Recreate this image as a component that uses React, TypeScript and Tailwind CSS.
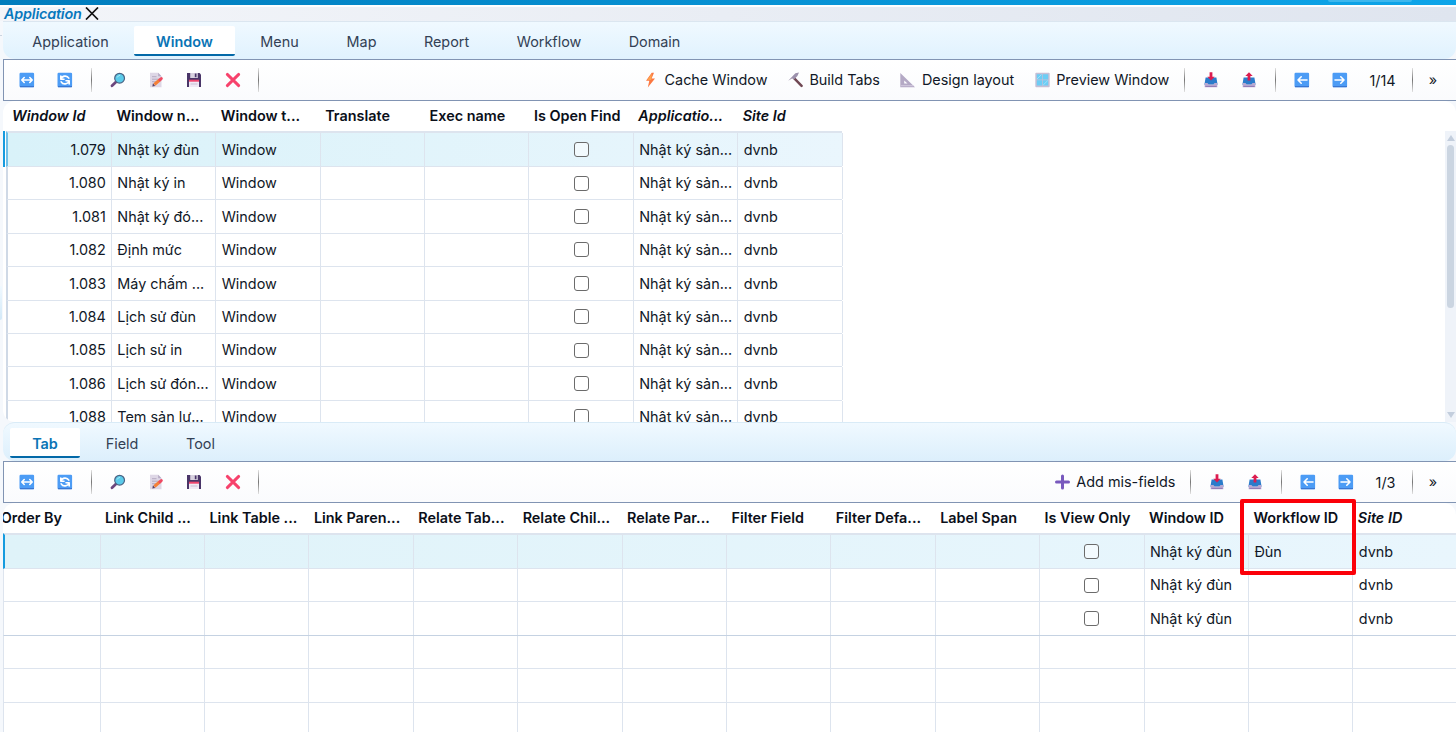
import type { ReactNode } from 'react'
import clsx from 'clsx'

type Column = {
  label: string
  italic?: boolean
}

const mainTabs = ['Application', 'Window', 'Menu', 'Map', 'Report', 'Workflow', 'Domain']
const detailTabs = ['Tab', 'Field', 'Tool']

const windowColumns: Column[] = [
  { label: 'Window Id', italic: true },
  { label: 'Window n...' },
  { label: 'Window t...' },
  { label: 'Translate' },
  { label: 'Exec name' },
  { label: 'Is Open Find' },
  { label: 'Applicatio...', italic: true },
  { label: 'Site Id', italic: true },
]

const windowRows = [
  { id: '1.079', name: 'Nhật ký đùn' },
  { id: '1.080', name: 'Nhật ký in' },
  { id: '1.081', name: 'Nhật ký đó...' },
  { id: '1.082', name: 'Định mức' },
  { id: '1.083', name: 'Máy chấm ...' },
  { id: '1.084', name: 'Lịch sử đùn' },
  { id: '1.085', name: 'Lịch sử in' },
  { id: '1.086', name: 'Lịch sử đón...' },
  { id: '1.088', name: 'Tem sản lư...' },
]

const tabColumns: Column[] = [
  { label: 'Order By' },
  { label: 'Link Child ...' },
  { label: 'Link Table ...' },
  { label: 'Link Paren...' },
  { label: 'Relate Tab...' },
  { label: 'Relate Chil...' },
  { label: 'Relate Par...' },
  { label: 'Filter Field' },
  { label: 'Filter Defa...' },
  { label: 'Label Span' },
  { label: 'Is View Only' },
  { label: 'Window ID' },
  { label: 'Workflow ID' },
  { label: 'Site ID', italic: true },
]

const tabRows = [
  { window: 'Nhật ký đùn', workflow: 'Đùn', site: 'dvnb' },
  { window: 'Nhật ký đùn', workflow: '', site: 'dvnb' },
  { window: 'Nhật ký đùn', workflow: '', site: 'dvnb' },
]

const App = () => (
  <div className="flex h-[732px] w-[1456px] flex-col overflow-hidden bg-[#f5f8fc] font-['Inter','Noto_Sans',sans-serif] text-[14.4px] text-[#111827]">
    <div className="flex h-[5px] shrink-0 justify-end bg-linear-to-r from-[#027dbd] to-[#0ea5e9] pr-11">
      <div className="h-[2px] w-[84px] rounded-b bg-[#3eb7ed]" />
    </div>
    <TitleStrip />
    <div className="flex min-h-0 flex-1">
      {/* Edge of the collapsed sidebar */}
      <div className="flex w-[3px] shrink-0 flex-col pr-px">
        <div className="mt-[14px] h-px bg-[#cbd5e1]" />
        <div className="mt-[250px] h-[34px] rounded-br-xs bg-linear-to-b from-[#f0f9ff] to-[#d3e9f8]" />
      </div>
      <div className="flex min-w-0 flex-1 flex-col">
        {/* Master: windows */}
        <nav className="flex h-[38px] shrink-0 rounded-b-xl border-t border-[#dbe6f0] bg-linear-to-b from-[#f0f9ff] to-[#e0f2fe] pt-1">
          <TabItem label={mainTabs[0]} className="w-[131px] pl-[4px]" />
          <TabItem label={mainTabs[1]} className="w-[101px]" active />
          <TabItem label={mainTabs[2]} className="w-[89px]" />
          <TabItem label={mainTabs[3]} className="w-[75px]" />
          <TabItem label={mainTabs[4]} className="w-[95px]" />
          <TabItem label={mainTabs[5]} className="w-[110px]" />
          <TabItem label={mainTabs[6]} className="w-[101px]" />
        </nav>
        <Toolbar page="1/14" pageClass="w-[46px]">
          <ToolAction icon={<BoltIcon />} label="Cache Window" />
          <ToolAction icon={<PickIcon />} label="Build Tabs" />
          <ToolAction icon={<RulerIcon />} label="Design layout" />
          <ToolAction icon={<WindowIcon />} label="Preview Window" />
        </Toolbar>
        <WindowGrid />

        {/* Detail: tabs of the selected window */}
        <nav className="flex h-[39px] shrink-0 rounded-xl border-t border-[#d9ebf7] bg-linear-to-b from-[#f0f9ff] to-[#dceffc] pt-[5px] pl-[7px]">
          <TabItem label={detailTabs[0]} className="w-[70px]" active />
          <TabItem label={detailTabs[1]} className="w-[84px]" />
          <TabItem label={detailTabs[2]} className="w-[73px]" />
        </nav>
        <Toolbar page="1/3" pageClass="w-[40px]">
          <ToolAction icon={<PlusIcon />} label="Add mis-fields" />
        </Toolbar>
        <TabGrid />
      </div>
    </div>
  </div>
)

const TitleStrip = () => (
  <div className="flex h-4 shrink-0 items-center border-t-2 border-[#fdfeff] bg-linear-to-r from-[#f3f5f9] to-[#dfe5ef] pl-1">
    <span className="-mt-px text-[14.4px] leading-[14px] font-semibold tracking-[-0.2px] text-[#0878bd] italic">
      Application
    </span>
    <svg className="-mt-px ml-[3px] h-[13px] w-[14px]" viewBox="0 0 14 13" fill="none">
      <path d="M1 0.5 13 12.5M13 0.5 1 12.5" stroke="#111" strokeWidth="1.7" />
    </svg>
  </div>
)

const TabItem = ({
  label,
  active,
  className,
}: {
  label: string
  active?: boolean
  className?: string
}) => (
  <div
    className={clsx(
      'flex h-[30px] items-center justify-center border-b-2 pt-[3px]',
      active
        ? 'rounded-xs border-[#0369a8] bg-white font-semibold text-[#0a74b5]'
        : 'border-transparent text-[#334155]',
      className
    )}
  >
    {label}
  </div>
)

const Toolbar = ({
  page,
  pageClass,
  children,
}: {
  page: string
  pageClass: string
  children: ReactNode
}) => (
  <div className="flex h-[42px] shrink-0 items-center border-y border-l border-[#8194b3] bg-linear-to-b from-white to-[#fafbfd] pr-[9px] pl-1">
    <ToolButton><BlueBox><ArrowsPath /></BlueBox></ToolButton>
    <ToolButton><BlueBox><RefreshPath /></BlueBox></ToolButton>
    <Separator />
    <ToolButton><SearchIcon /></ToolButton>
    <ToolButton><MemoIcon /></ToolButton>
    <ToolButton><SaveIcon /></ToolButton>
    <ToolButton><CrossIcon /></ToolButton>
    <Separator />
    <div className="flex-1" />
    {children}
    <Separator />
    <ToolButton><TrayIcon /></ToolButton>
    <ToolButton><TrayIcon up /></ToolButton>
    <Separator />
    <ToolButton><BlueBox><path d="M13 8H4M7.2 4.8 4 8l3.2 3.2" /></BlueBox></ToolButton>
    <ToolButton><BlueBox><path d="M3 8h9M8.8 4.8 12 8l-3.2 3.2" /></BlueBox></ToolButton>
    <div className={clsx('pt-0.5 pl-px text-center', pageClass)}>{page}</div>
    <Separator />
    <div className="w-7 text-center">»</div>
  </div>
)

const ToolButton = ({ children }: { children: ReactNode }) => (
  <div className="flex w-[38.3px] items-center justify-center">{children}</div>
)

const ToolAction = ({ icon, label }: { icon: ReactNode; label: string }) => (
  <div className="flex items-center gap-[6.5px] pr-[8.5px] pl-3 whitespace-nowrap">
    {icon}
    <span>{label}</span>
  </div>
)

const Separator = () => (
  <div className="flex w-[14px] justify-center">
    <div className="h-6 w-px bg-linear-to-b from-[#e2e2e2] via-[#777] to-[#e2e2e2]" />
  </div>
)

const HeaderRow = ({ columns }: { columns: Column[] }) => (
  <>
    {columns.map((column) => (
      <div
        key={column.label}
        className={clsx(
          'w-[104.4px] shrink-0 pl-[5px] font-semibold whitespace-nowrap text-[#0b0f19]',
          column.italic && 'italic'
        )}
      >
        {column.label}
      </div>
    ))}
  </>
)

const Cell = ({ children, className }: { children?: ReactNode; className?: string }) => (
  <div
    className={clsx(
      'flex h-full w-[104.4px] shrink-0 items-center border-r border-[#dde4ee] whitespace-nowrap',
      className ?? 'pl-[5.5px]'
    )}
  >
    {children}
  </div>
)

const Checkbox = () => (
  <div className="h-[15px] w-[15px] rounded-[3px] border border-[#6b6b6b] bg-white/50" />
)

const WindowGrid = () => (
  <div className="flex h-[321px] shrink-0 flex-col overflow-hidden rounded-xl rounded-br-none bg-white">
    <div className="flex h-[30px] shrink-0 items-center pl-[4px]">
      <HeaderRow columns={windowColumns} />
    </div>
    <div className="flex min-h-0 flex-1">
      <div className="w-[840px] shrink-0 overflow-hidden">
        {windowRows.map((row, index) => (
          <div
            key={row.id}
            className={clsx(
              'flex',
              index === 0 ? 'h-[36px] border-l-2 border-[#159bdf]' : 'h-[33.4px] pl-[2px]'
            )}
          >
            <div
              className={clsx(
                'ml-px flex w-[836px] border-b border-l-2 border-[#dde4ee]',
                index === 0
                  ? 'border-t-2 border-l-[#6fc0e8] bg-linear-to-r from-[#d9f2f9] to-[#eaf6fd]'
                  : 'border-l-[#cfd9e6]'
              )}
            >
              <div className="-ml-[0.6px] flex">
                <Cell className="justify-end pr-[5px]">{row.id}</Cell>
                <Cell>{row.name}</Cell>
                <Cell>Window</Cell>
                <Cell />
                <Cell />
                <Cell className="justify-center"><Checkbox /></Cell>
                <Cell>Nhật ký sản...</Cell>
                <Cell>dvnb</Cell>
              </div>
            </div>
          </div>
        ))}
      </div>
      <div className="flex-1" />
      <div className="flex w-[11px] flex-col items-center bg-[#eff3f9] py-1">
        <svg width="8" height="6" viewBox="0 0 8 6"><path d="M4 0 8 6H0z" fill="#c3cedd" /></svg>
        <div className="mt-1 h-[163px] w-[7px] rounded-full bg-[#cbd5e1]" />
        <div className="flex-1" />
        <svg width="8" height="6" viewBox="0 0 8 6"><path d="M0 0h8L4 6z" fill="#c3cedd" /></svg>
      </div>
    </div>
  </div>
)

const TabGrid = () => (
  <div className="relative flex min-h-0 flex-1">
    <div className="flex flex-1 flex-col overflow-hidden rounded-t-xl bg-white">
      <div className="-ml-[7.3px] flex h-[30px] shrink-0 items-center">
        <HeaderRow columns={tabColumns} />
      </div>
      <div className="flex-1 overflow-hidden">
        {tabRows.map((row, index) => (
          <div
            key={index}
            className={clsx(
              'flex border-b border-l border-[#dde4ee]',
              index === 0
                ? 'h-[36px] border-t-2 border-l-2 border-l-[#159bdf] bg-linear-to-r from-[#dff3f9] to-[#e9f6fd]'
                : 'h-[33.4px]',
              index === 2 && 'border-b-[#c5d2e2]'
            )}
          >
            <div className={clsx('flex', index === 0 ? '-ml-[8.8px]' : '-ml-[7.8px]')}>
              {tabColumns.slice(0, 10).map((column) => (
                <Cell key={column.label} />
              ))}
              <Cell className="justify-center"><Checkbox /></Cell>
              <Cell>{row.window}</Cell>
              <Cell>{row.workflow}</Cell>
              <Cell>{row.site}</Cell>
            </div>
          </div>
        ))}
        {/* Filler rows below the data */}
        {[0, 1, 2].map((index) => (
          <div key={index} className="flex h-[33.5px] border-b border-l border-[#dde4ee]">
            <div className="-ml-[7.8px] flex">
              {tabColumns.map((column) => (
                <Cell key={column.label} />
              ))}
            </div>
          </div>
        ))}
      </div>
    </div>
    <div className="absolute top-[-4px] left-[1237px] h-[76px] w-[116px] rounded-xs border-4 border-[#fb0009]" />
  </div>
)

const BlueBox = ({ children }: { children: ReactNode }) => (
  <svg width="16" height="16" viewBox="0 0 16 16" fill="none">
    <rect x="0.5" y="0.7" width="14.6" height="14.6" rx="1.2" fill="#4c9cf5" />
    <path d="M1 14.6h14" stroke="#3a76d2" strokeWidth="1.2" />
    <g stroke="#fff" strokeWidth="1.6" strokeLinecap="round" strokeLinejoin="round">
      {children}
    </g>
  </svg>
)

const ArrowsPath = () => <path d="M3 8h10M5.2 5.5 2.8 8l2.4 2.5M10.8 5.5 13.2 8l-2.4 2.5" />

const RefreshPath = () => (
  <path d="M3.8 4v3.2H7M4 7c1.2-3.4 6-4 7.8-.8M12.2 12V8.8H9M12 9c-1.2 3.4-6 4-7.8.8" />
)

const SearchIcon = () => (
  <svg width="16" height="16" viewBox="0 0 16 16" fill="none">
    <path d="m6.2 9.8-4.2 4" stroke="#6d477d" strokeWidth="2.8" strokeLinecap="round" />
    <circle cx="9.6" cy="6.2" r="4.9" fill="#5bcbea" stroke="#4b6383" strokeWidth="1.2" />
    <path d="M7.2 5.2a3 3 0 0 1 2.5-1.8" stroke="#a8e9f6" strokeLinecap="round" />
  </svg>
)

const MemoIcon = () => (
  <svg width="16" height="16" viewBox="0 0 16 16" fill="none">
    <path d="M2 .8h8.2l3.3 3.4v11H2z" fill="#ded7e6" />
    <path d="M10.2.8v3.4h3.3z" fill="#b6abc4" />
    <path d="M4 4.7h4.5M4 7.2h6.5M4 9.7h4M4 12.2h2" stroke="#b5abc2" />
    <path d="m6.4 12.5 5.8-5" stroke="#f58038" strokeWidth="3" />
    <path d="m11.9 7.8 1.4-1.2" stroke="#ef4962" strokeWidth="3" strokeLinecap="round" />
    <path d="m5.2 11.5 2 2.4-3 .7z" fill="#5c4265" />
  </svg>
)

const SaveIcon = () => (
  <svg width="16" height="16" viewBox="0 0 16 16">
    <path d="M1 1h12.6L15 2.6V15H1z" fill="#493568" />
    <path d="M4.2 1h7.6v5H4.2z" fill="#d8d1df" />
    <path d="M8.8 1.5h1.7v3.7H8.8z" fill="#493568" />
    <path d="M3 8h10v7H3z" fill="#efe9f4" />
    <path d="M3 7.7h10v2H3z" fill="#ef466e" />
    <path d="M4.5 12h7" stroke="#c9bfd5" />
  </svg>
)

const CrossIcon = () => (
  <svg width="16" height="16" viewBox="0 0 16 16" fill="none">
    <path d="M2.3 2.4 13.7 13.6M13.7 2.4 2.3 13.6" stroke="#f7426c" strokeWidth="2.9" strokeLinecap="round" />
  </svg>
)

const BoltIcon = () => (
  <svg width="15" height="16" viewBox="0 0 15 16">
    <path d="M8.7.8 3 8.8h3.3L4.8 15.4l7.2-9H8.6L11 .8z" fill="#fb7842" />
    <path d="m8.9 1.6-4.7 6.4h4z" fill="#fda24f" />
  </svg>
)

const PickIcon = () => (
  <svg width="15" height="16" viewBox="0 0 15 16" fill="none">
    <path d="m5.8 5.8 7.8 8" stroke="#704753" strokeWidth="2.5" strokeLinecap="round" />
    <path d="M.2 8.8 7.4 1.2 11 .6 9.4 3.9 6 7.4 4.4 6.2z" fill="#9c91ac" />
  </svg>
)

const RulerIcon = () => (
  <svg width="15" height="16" viewBox="0 0 15 16">
    <path fillRule="evenodd" d="M.3 1 15 15.2H.3zM4.2 8.4V11.6h3.3z" fill="#b4a9c5" />
    <path d="M.8 13.7h12.6" stroke="#d3cadf" />
  </svg>
)

const WindowIcon = () => (
  <svg width="15" height="16" viewBox="0 0 15 16">
    <rect x="0.3" y="0.8" width="14.4" height="14.4" rx="1" fill="#c5bfd5" />
    <path d="M1.8 2.3h5.3v5.3H1.8zM7.8 2.3h5.4v5.3H7.8zM1.8 8.3h5.3v5.3H1.8zM7.8 8.3h5.4v5.3H7.8z" fill="#6ccdf5" />
    <path d="m2 7 4.5-4.5M8.2 13l4.6-4.5" stroke="#9ce1fa" />
  </svg>
)

const PlusIcon = () => (
  <svg width="15" height="16" viewBox="0 0 15 16" fill="none">
    <path d="M7.5 2v12M1.5 8h12" stroke="#7859bd" strokeWidth="3" strokeLinecap="round" />
  </svg>
)

const TrayIcon = ({ up }: { up?: boolean }) => (
  <svg width="16" height="16" viewBox="0 0 16 16">
    <path d="M2.6 5.4h10.8l1.2 7.4H1.4z" fill="#2b7ccb" />
    <path d="M1.7 11h2.8l1.2 1.5h4.6l1.2-1.5h2.8v4.3H1.7z" fill="#b9a9d2" />
    <path d="M2.4 14.4h11.2" stroke="#8f78b4" />
    <path d={up ? 'M8 .2 11.7 4H9.4v4.4H6.6V4H4.3z' : 'M6.6.2h2.8v4.5h2.3L8 8.4 4.3 4.7h2.3z'} fill="#dc1c50" />
  </svg>
)

export default App
